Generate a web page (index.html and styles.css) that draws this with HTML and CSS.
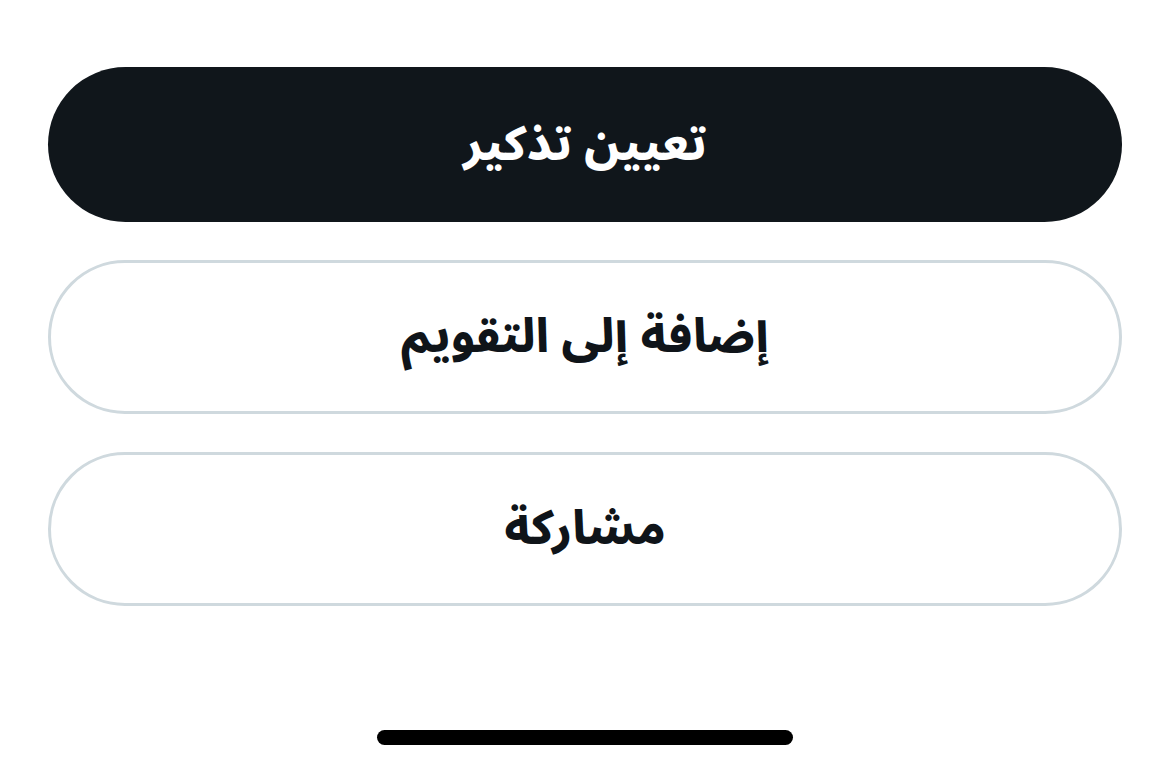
FILE: index.html
```html
<!DOCTYPE html>
<html lang="ar" dir="rtl">
<head>
    <meta charset="UTF-8">
    <meta name="viewport" content="width=device-width, initial-scale=1.0">
    <title>تعيين تذكير</title>
    <link rel="stylesheet" href="styles.css">
</head>
<body>

    <div class="sheet">
        <div class="actions">
            <button class="btn btn-primary">تعيين تذكير</button>
            <button class="btn btn-outline">إضافة إلى التقويم</button>
            <button class="btn btn-outline">مشاركة</button>
        </div>
        <div class="home-indicator"></div>
    </div>

</body>
</html>
```

FILE: styles.css
```css
body { margin: 0; background-color: #ffffff; font-family: "Noto Sans Arabic", "DejaVu Sans", sans-serif; }

.sheet {
    width: 1170px;
    height: 769px;
    box-sizing: border-box;
    padding: 67px 48px 0;
    display: flex;
    flex-direction: column;
    align-items: center;
}

.actions { display: flex; flex-direction: column; gap: 38px; width: 100%; }

.btn {
    height: 155px;
    width: 100%;
    border-radius: 78px;
    font-family: inherit;
    font-size: 47px;
    font-weight: 800;
    cursor: pointer;
    box-sizing: border-box;
}
.btn-primary { background-color: #10161b; color: #ffffff; border: none; }
.btn-outline { background-color: #ffffff; color: #0f1419; border: 3px solid #cfd9de; height: 154px; }

.home-indicator {
    margin-top: 124px;
    width: 416px;
    height: 15px;
    border-radius: 8px;
    background-color: #000000;
}
```
